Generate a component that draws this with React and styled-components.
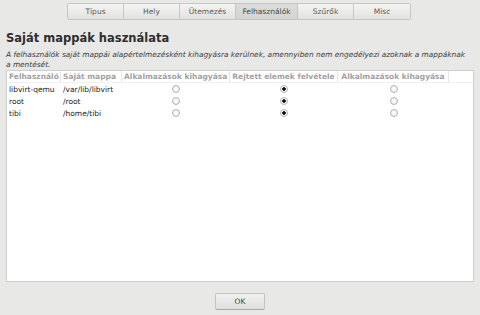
import React from 'react'
import styled, { createGlobalStyle } from 'styled-components'

const GlobalStyle = createGlobalStyle`
    html, body {
        margin: 0;
        padding: 0;
        background: #e8e8e7;
        font-family: 'DejaVu Sans', 'Liberation Sans', sans-serif;
    }
`

const tabs = ['Típus', 'Hely', 'Ütemezés', 'Felhasználók', 'Szűrők', 'Misc']

const users = [
    { name: 'libvirt-qemu', home: '/var/lib/libvirt' },
    { name: 'root', home: '/root' },
    { name: 'tibi', home: '/home/tibi' },
]

const columns = [
    'Felhasználó',
    'Saját mappa',
    'Alkalmazások kihagyása',
    'Rejtett elemek felvétele',
    'Alkalmazások kihagyása',
]

const App = () => {
    return (
        <>
        <GlobalStyle/>
        <Page>
            <TabBar>
                {tabs.map((t) => (
                    <Tab key={t} active={t === 'Felhasználók'}>{t}</Tab>
                ))}
            </TabBar>

            <Title>Saját mappák használata</Title>
            <Text>
                A felhasználók saját mappái alapértelmezésként kihagyásra kerülnek, amennyiben nem engedélyezi azoknak a mappáknak a mentését.
            </Text>

            <Table>
                <HeaderRow>
                    {columns.map((c, i) => (
                        <HeaderCell key={i} align={i > 1 ? 'center' : 'left'}>{c}</HeaderCell>
                    ))}
                    <HeaderCell/>
                </HeaderRow>
                {users.map((u) => (
                    <Row key={u.name}>
                        <Cell>{u.name}</Cell>
                        <Cell>{u.home}</Cell>
                        <Cell align="center"><Radio/></Cell>
                        <Cell align="center"><Radio checked/></Cell>
                        <Cell align="center"><Radio/></Cell>
                        <Cell/>
                    </Row>
                ))}
            </Table>

            <Footer>
                <Button>OK</Button>
            </Footer>
        </Page>
        </>
    )
}

const Page = styled.div`
    width: 480px;
    height: 315px;
    box-sizing: border-box;
    padding: 3px 6px 0 6px;
    display: flex;
    flex-direction: column;
`

const TabBar = styled.div`
    display: flex;
    align-self: center;
    margin-left: -2px;
    border: 1px solid #c6c6c4;
    border-radius: 2px;
    overflow: hidden;
`

const Tab = styled.div`
    width: 56px;
    height: 15px;
    box-sizing: border-box;
    display: flex;
    align-items: center;
    justify-content: center;
    font-size: 7.5px;
    color: ${(p) => (p.active ? '#4a4a4a' : '#5a5a5a')};
    background: ${(p) => (p.active ? 'linear-gradient(#dcdcda, #d4d4d2)' : 'linear-gradient(#f4f4f3, #e2e2e0)')};
    border-right: 1px solid #c6c6c4;
    &:nth-child(4) { width: 62px; }
    &:last-child { border-right: none; }
`

const Title = styled.h1`
    margin: 11px 0 0 0;
    font-size: 11.5px;
    font-weight: bold;
    color: #2e2e2e;
    line-height: 14px;
`

const Text = styled.p`
    margin: 5px 0 0 0;
    max-width: 462px;
    font-size: 7.4px;
    font-style: italic;
    color: #3c3c3c;
    line-height: 10px;
`

const grid = '54px 61px 108px 108px 111px 1fr'

const Table = styled.div`
    height: 212px;
    flex-shrink: 0;
    box-sizing: border-box;
    background: #fff;
    border: 1px solid #cfcfcd;
`

const HeaderRow = styled.div`
    display: grid;
    grid-template-columns: ${grid};
    height: 12px;
    box-sizing: border-box;
    border-bottom: 1px solid #f0f0f0;
`

const HeaderCell = styled.div`
    padding: 0 2px;
    font-size: 7.5px;
    font-weight: bold;
    color: #a2a2a2;
    line-height: 11px;
    white-space: nowrap;
    text-align: ${(p) => p.align || 'left'};
    border-right: 1px solid #e6e6e6;
    &:last-child { border-right: none; }
`

const Row = styled.div`
    display: grid;
    grid-template-columns: ${grid};
    height: 12px;
    align-items: center;
`

const Cell = styled.div`
    padding: 0 2px;
    font-size: 7.5px;
    color: #222;
    white-space: nowrap;
    display: flex;
    justify-content: ${(p) => (p.align === 'center' ? 'center' : 'flex-start')};
`

const Radio = styled.span`
    width: 8px;
    height: 8px;
    box-sizing: border-box;
    border-radius: 50%;
    border: 1px solid #b4b4b4;
    background: radial-gradient(circle, ${(p) => (p.checked ? '#111 0, #111 1.5px, #fff 2px' : '#fff 0')}, #e8e8e8 100%);
`

const Footer = styled.div`
    display: flex;
    justify-content: center;
    padding-top: 11px;
`

const Button = styled.button`
    width: 50px;
    height: 17px;
    padding: 0;
    font-family: 'DejaVu Sans', sans-serif;
    font-size: 7.5px;
    color: #444;
    background: linear-gradient(#f2f2f1, #dededc);
    border: 1px solid #c4c4c2;
    border-bottom-color: #a8a8a6;
    border-radius: 2px;
`

export default App
